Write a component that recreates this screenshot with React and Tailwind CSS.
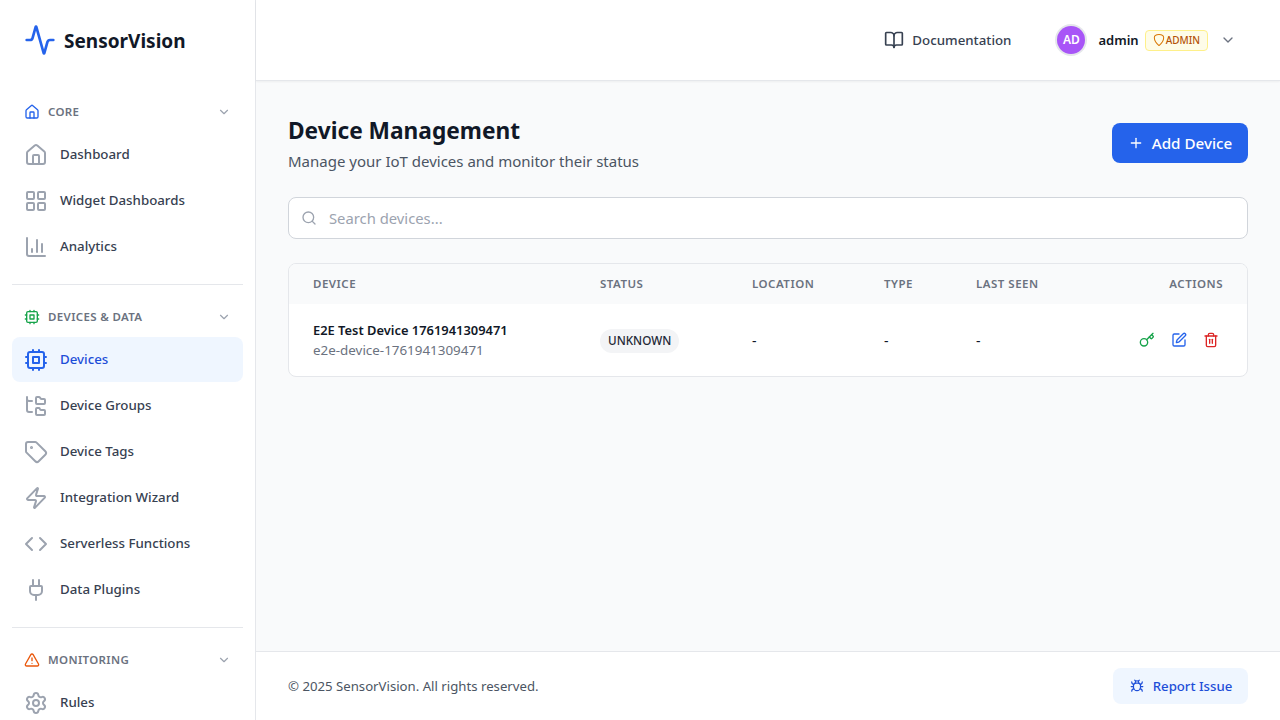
import React from "react";
import {
  Activity, House, LayoutGrid, ChartColumn, FolderTree, Tag, Zap, Code, Plug, Settings,
  TriangleAlert, ChevronDown, BookOpen, Plus, Search, Key, SquarePen, Trash2,
} from "lucide-react";

function Cpu({ className }) {
  return (
    <svg viewBox="0 0 24 24" fill="none" stroke="currentColor" strokeWidth="2" strokeLinecap="round" strokeLinejoin="round" className={className}>
      <rect x="4" y="4" width="16" height="16" rx="2" />
      <rect x="9" y="9" width="6" height="6" />
      <path d="M15 2v2M15 20v2M2 15h2M2 9h2M20 15h2M20 9h2M9 2v2M9 20v2" />
    </svg>
  );
}

function BugIcon({ className }) {
  return (
    <svg viewBox="0 0 24 24" fill="none" stroke="currentColor" strokeWidth="2" strokeLinecap="round" strokeLinejoin="round" className={className}>
      <path d="m8 2 1.9 1.9M16 2l-1.9 1.9" />
      <path d="M9 7V6a3 3 0 1 1 6 0v1" />
      <path d="M12 20c-3.3 0-6-2.7-6-6v-3a4 4 0 0 1 4-4h4a4 4 0 0 1 4 4v3c0 3.3-2.7 6-6 6z" />
      <path d="M6.5 9C4.6 8.8 3 7.100 3 5M6 13H2M3 21c0-2.100 1.700-3.900 3.800-4M21 5c0 2.100-1.600 3.800-3.500 4M22 13h-4M17.200 17c2.100.1 3.800 1.900 3.800 4" />
    </svg>
  );
}

function ShieldIcon({ className }) {
  return (
    <svg viewBox="0 0 24 24" fill="none" stroke="currentColor" strokeWidth="1.75" strokeLinecap="round" strokeLinejoin="round" className={className}>
      <path d="M12 2.500c4.500 0 8 1.500 8 5.500 0 6.500-4.500 10.500-8 13.500-3.500-3-8-7-8-13.500 0-4 3.500-5.500 8-5.500z" />
    </svg>
  );
}

const sections = [
  {
    title: "CORE", Icon: House, color: "text-[#2563eb]",
    items: [
      { label: "Dashboard", Icon: House },
      { label: "Widget Dashboards", Icon: LayoutGrid },
      { label: "Analytics", Icon: ChartColumn },
    ],
  },
  {
    title: "DEVICES & DATA", Icon: Cpu, color: "text-[#16a34a]",
    items: [
      { label: "Devices", Icon: Cpu, active: true },
      { label: "Device Groups", Icon: FolderTree },
      { label: "Device Tags", Icon: Tag },
      { label: "Integration Wizard", Icon: Zap },
      { label: "Serverless Functions", Icon: Code },
      { label: "Data Plugins", Icon: Plug },
    ],
  },
  {
    title: "MONITORING", Icon: TriangleAlert, color: "text-[#ea580c]",
    items: [{ label: "Rules", Icon: Settings }],
  },
];

function Sidebar() {
  return (
    <aside className="w-64 h-screen shrink-0 bg-white border-r border-[#e5e7eb] overflow-hidden">
      <div className="h-20 flex items-center pl-6 gap-2">
        <Activity className="w-8 h-8 text-[#2563eb]" />
        <span className="text-[19px] leading-7 pt-[2px] font-bold text-[#111827]">SensorVision</span>
      </div>
      <nav className="px-3 pt-4">
        {sections.map((s, i) => (
          <div key={s.title}>
            <div className="h-8 mb-1 flex items-center justify-between px-3">
              <div className="flex items-center gap-2">
                <s.Icon className={`w-4 h-4 ${s.color}`} />
                <span className="text-[11.5px] leading-4 tracking-[0.35px] font-semibold text-[#6b7280]">{s.title}</span>
              </div>
              <ChevronDown className="w-[14px] h-[14px] text-[#9ca3af]" />
            </div>
            <div className="flex flex-col gap-px">
              {s.items.map((it) => (
                <a
                  key={it.label}
                  className={`h-[45px] flex items-center gap-3 px-3 rounded-lg text-[13.3px] leading-5 font-medium ${
                    it.active ? "bg-[#eff6ff] text-[#1d4ed8]" : "text-[#374151]"
                  }`}
                >
                  <it.Icon className={`w-6 h-6 shrink-0 ${it.active ? "text-[#2563eb]" : "text-[#9ca3af]"}`} />
                  <span className="pb-[2px]">{it.label}</span>
                </a>
              ))}
            </div>
            {i < sections.length - 1 && <div className="mt-[15px] mb-4 h-px bg-[#e5e7eb]" />}
          </div>
        ))}
      </nav>
    </aside>
  );
}

function Header() {
  return (
    <header className="h-[81px] shrink-0 bg-white border-b border-[#e5e7eb] shadow-[0_1px_2px_rgba(0,0,0,0.05)] flex items-center justify-end pr-[44px]">
      <div className="flex items-center gap-2 text-[#374151] mr-[46px]">
        <BookOpen className="w-5 h-5" />
        <span className="text-[13.3px] leading-5 font-medium">Documentation</span>
      </div>
      <div className="w-[28px] h-[28px] rounded-full bg-[#a855f7] ring-2 ring-[#e5e7eb] flex items-center justify-center text-white text-xs font-semibold">
        AD
      </div>
      <span className="ml-[13px] text-[13px] leading-5 font-semibold text-[#111827]">admin</span>
      <span className="ml-[6px] h-[21px] pl-[6px] pr-[7px] flex items-center rounded border border-[#fef08a] bg-[#fefce8] text-[#b45309] text-[10px] font-medium">
        <ShieldIcon className="w-[14px] h-[14px] text-[#d97706]" />
        ADMIN
      </span>
      <ChevronDown className="ml-3 w-4 h-4 text-[#6b7280]" />
    </header>
  );
}

function DeviceTable() {
  const th = "h-10 text-[11.5px] tracking-[0.5px] font-semibold text-[#6b7280] text-left align-middle";
  return (
    <div className="mt-6 bg-white border border-[#e5e7eb] rounded-lg overflow-hidden">
      <table className="w-full table-fixed border-collapse">
        <colgroup>
          <col className="w-[287px]" />
          <col className="w-[152px]" />
          <col className="w-[132px]" />
          <col className="w-[92px]" />
          <col className="w-[120px]" />
          <col />
        </colgroup>
        <thead className="bg-[#f9fafb]">
          <tr>
            <th className={`${th} pl-6`}>DEVICE</th>
            <th className={`${th} pl-6`}>STATUS</th>
            <th className={`${th} pl-6`}>LOCATION</th>
            <th className={`${th} pl-6`}>TYPE</th>
            <th className={`${th} pl-6`}>LAST SEEN</th>
            <th className={`${th} pr-6 text-right`}>ACTIONS</th>
          </tr>
        </thead>
        <tbody>
          <tr className="h-[72px]">
            <td className="pl-6">
              <div className="text-[12.9px] leading-5 font-semibold text-[#111827]">E2E Test Device 1761941309471</div>
              <div className="text-[13.4px] leading-5 text-[#6b7280]">e2e-device-1761941309471</div>
            </td>
            <td className="pl-6">
              <span className="inline-flex items-center h-6 px-2 rounded-full bg-[#f3f4f6] text-[11.7px] font-medium text-[#1f2937]">UNKNOWN</span>
            </td>
            <td className="pl-6 pt-px text-sm text-[#111827]">-</td>
            <td className="pl-6 pt-px text-sm text-[#111827]">-</td>
            <td className="pl-6 pt-px text-sm text-[#111827]">-</td>
            <td className="pr-6">
              <div className="flex justify-end items-center gap-4 pr-[4px]">
                <Key className="w-4 h-4 text-[#16a34a]" />
                <SquarePen className="w-4 h-4 text-[#2563eb]" />
                <Trash2 className="w-4 h-4 text-[#dc2626]" />
              </div>
            </td>
          </tr>
        </tbody>
      </table>
    </div>
  );
}

export default function App() {
  return (
    <div className="flex h-screen overflow-hidden bg-[#f9fafb] font-['Noto_Sans',sans-serif]">
      <Sidebar />
      <div className="flex-1 flex flex-col min-w-0">
        <Header />
        <main className="flex-1 px-8 pt-[33px]">
          <div className="flex items-center justify-between">
            <div>
              <h1 className="text-[22.7px] leading-8 pt-px font-bold text-[#111827]">Device Management</h1>
              <p className="text-[15px] leading-[22px] text-[#4b5563] mt-[3px]">Manage your IoT devices and monitor their status</p>
            </div>
            <button className="h-10 w-[136px] rounded-lg bg-[#2563eb] text-white text-[15.2px] font-medium flex items-center justify-center gap-2">
              <Plus className="w-4 h-4" />
              Add Device
            </button>
          </div>
          <div className="mt-[25px] h-[42px] bg-white border border-[#d1d5db] rounded-lg flex items-center pl-3 gap-3">
            <Search className="w-4 h-4 text-[#9ca3af]" />
            <span className="text-[14.8px] text-[#9ca3af]">Search devices...</span>
          </div>
          <DeviceTable />
        </main>
        <footer className="h-[69px] shrink-0 bg-white border-t border-[#e5e7eb] px-8 flex items-center justify-between">
          <span className="text-[13.2px] leading-5 text-[#4b5563]">© 2025 SensorVision. All rights reserved.</span>
          <button className="h-9 w-[135px] rounded-lg bg-[#eff6ff] text-[#1d4ed8] text-[13.2px] leading-5 font-medium flex items-center justify-center gap-2">
            <BugIcon className="w-[14px] h-[14px] mx-px" />
            <span>Report Issue</span>
          </button>
        </footer>
      </div>
    </div>
  );
}
